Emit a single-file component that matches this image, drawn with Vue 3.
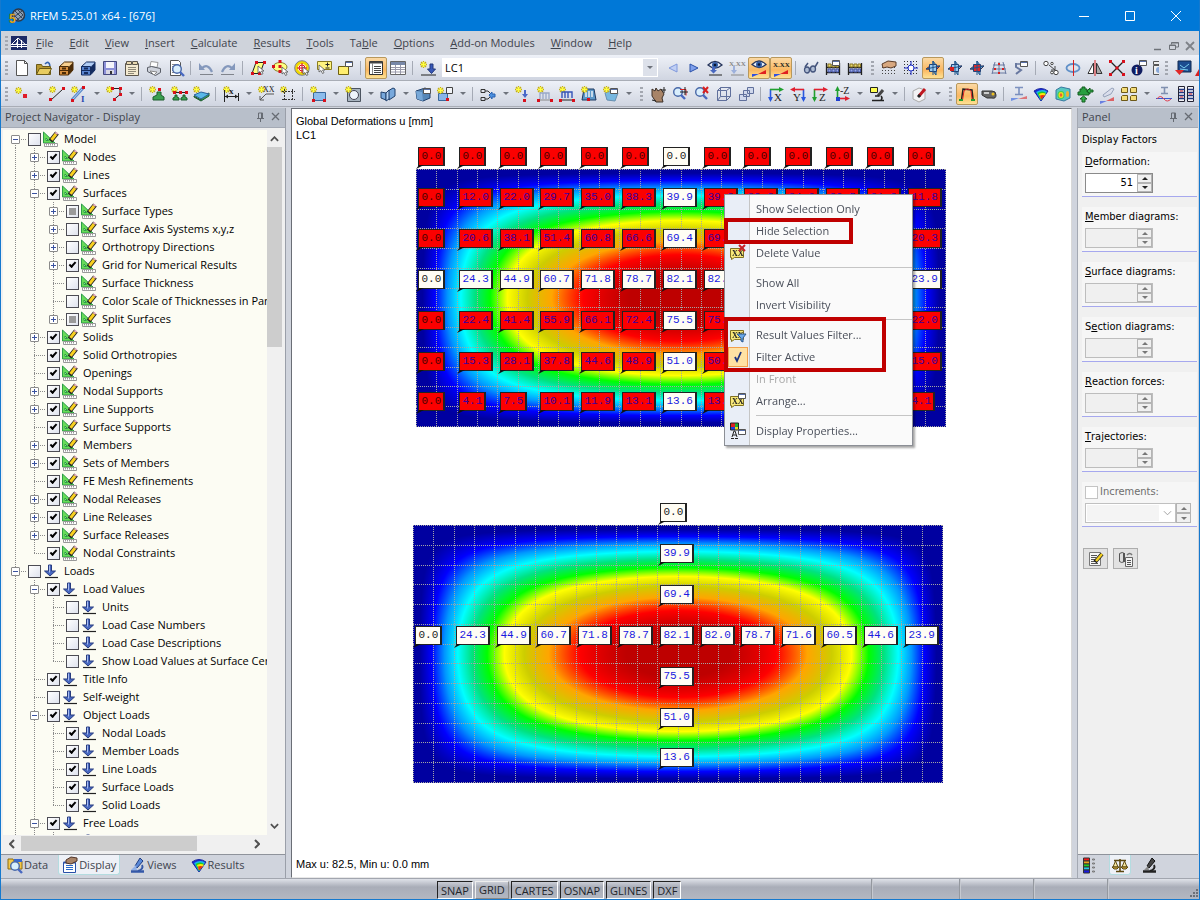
<script setup>
import { onMounted, ref } from 'vue'

/* ---------- icon drawing helpers (16 x 16 grid) ---------- */
const star = (x = 0, y = 0) =>
  `<g transform="translate(${x} ${y})"><path d="M3.5 0v7M0 3.5h7M1 1l5 5M6 1l-5 5" stroke="#c4ae18" stroke-width="1.3"/><path d="M3.5 1v5M1 3.5h5" stroke="#ffff40" stroke-width="1.6"/></g>`
const dot = (...pts) => pts.map(([x, y]) => `<path d="M${x} ${y}h3v3h-3z" fill="#d8101c"/>`).join('')
const ln = (d, c = '#333', w = 1) => `<path d="${d}" stroke="${c}" stroke-width="${w}" fill="none"/>`
const fl = (d, c, s = 'none') => `<path d="${d}" fill="${c}" stroke="${s}"/>`
const cursor = (x, y) =>
  `<path transform="translate(${x} ${y})" d="M0 0v7l2-1.500 1.500 3 1.500-.8-1.500-2.700H6z" fill="#fff" stroke="#555" stroke-width=".8"/>`
const win = (x, y) =>
  fl(`M${x}.5 ${y}.5h7v5h-7z`, '#fff', '#555') + ln(`M${x + 1} ${y + 1}.500h6`, '#5870a8')
const dots = (n, c = '#444') => {
  let s = ''
  for (let i = 1; i < 16; i += 3) for (let j = n; j < 16; j += 3) s += `M${i} ${j}h1v1h-1z`
  return fl(s, c)
}
const txt = (x, y, s, t, c = '#222') =>
  `<text x="${x}" y="${y}" font-size="${s}" font-weight="bold" font-family="Liberation Serif,serif" fill="${c}">${t}</text>`
const thin = (x, y, s, t) =>
  `<text x="${x}" y="${y}" font-size="${s}" font-family="Liberation Serif,serif" fill="#222">${t}</text>`
const arrowDown = (x, c = '#3858b8') => fl(`M${x} 4h3v5h2.500l-4 4.500-4-4.500H${x}z`, c, '#22387c')
const eye = (y = 0) =>
  `<g transform="translate(0 ${y})"><path d="M1 5q7-7 14 0q-7 6-14 0z" fill="#e8eef8" stroke="#28365c" stroke-width="1.300"/><circle cx="8" cy="5" r="3" fill="#345fa8"/><circle cx="8" cy="5" r="1.300" fill="#0a1530"/></g>`
const cabinet = (a, b, c) =>
  fl('M1.500 6.500l5-4.500h8.500v8l-4 4.500h-9.500z', a, c) + fl('M1.500 6.500h9v8.500h-9z', b, c) + fl('M11 6.500l4-4v7.500l-4 4.500z', c) +
  ln('M1.500 10.500h9', c) + fl('M4 7.500h4v2H4zM4 12h4v2H4z', c)
const lens = (x = 6, y = 6) =>
  `<circle cx="${x}" cy="${y}" r="4.300" fill="#d9eefc" stroke="#4868a8" stroke-width="1.400"/>` +
  ln(`M${x + 3} ${y + 3}l4 4`, '#4868c0', 2.4)
const beads = () =>
  ln('M1.500 3v12M14.500 3v12M1 7.500h14M1 12.500h14', '#222', 1.3) +
  fl('M3 4h3v3H3zM7 4h3v3H7zM11 4h2.500v3H11z', '#e8d870', '#887520') +
  fl('M3 9h3v3H3zM7 9h3v3H7zM11 9h2.500v3H11z', '#98a8e8', '#4050a0')
const ramp = (y = 0) =>
  fl(`M1 ${11 + y}l7 0-7 3z`, '#3050e0') + fl(`M15 ${7 + y}v4h-8z`, '#e02020')
const planes = (a, b) =>
  fl('M8 1l3 4v10l-3-4z', '#7cb4d8', '#20558a') + fl('M1 9l4-3h10l-4 4z', a, '#40304c') + fl('M4.500 4.500h7v7h-7z', b, '#204478') +
  ln('M8 1v14M1 9l14-3', '#20558a')
const contour3 =
  fl('M1 5q7-5 14 0l-7 10z', '#1828d8', '#1828a0') + fl('M3 6q6-3.500 11-.5l-6 9z', '#18b8e8') +
  fl('M4.500 7q5-3 8.500 0l-5 7z', '#20d020') + fl('M6 8q4-2 7 0l-5 5z', '#f8e810') + fl('M7 9.500q3-1 5 0l-4 4z', '#f03010')

const ic = {
  logo: `<circle cx="9.500" cy="7" r="6" fill="#8fa0b4" stroke="#2e3848" stroke-width="1.500"/>` + ln('M6 3l7 7M5 7l5 5M9 2l5 5M5 9l8-6M8 12l6-5', '#344458') +
    `<text x="0" y="15" font-size="12" font-weight="bold" font-family="Liberation Sans,sans-serif" fill="#ffc428" stroke="#7a5200" stroke-width=".4">5</text>`,
  bridge: fl('M0 1h16v14H0z', '#1c2a66') + ln('M0 9.500h16M0 11.500h16M6.500 3v10M10.500 5v8M7 3L1 9M7 3l8 7M7 6L5 9', '#fff', 1),
  file: fl('M2.500.5h8l3 3v12h-11z', '#fff', '#555') + ln('M10.500.5v3h3', '#555'),
  open: fl('M.5 4.500h5l1 2h8v8H.5z', '#b89830', '#6b5a18') + fl('M3.500 8.500h12l-3 6h-12z', '#e8cc60', '#6b5a18') + ln('M9 4q4-4 5 2', '#3464b0', 1.600),
  cabA: cabinet('#f8d090', '#d89040', '#4c2c08'),
  cabB: cabinet('#b0ccf4', '#5884d0', '#142c60'),
  save: fl('M1.500 1.500h13v13h-13z', '#8c90d8', '#44487c') + fl('M4 2h8v6H4z', '#f4f4fa') + fl('M4 10h8v4H4z', '#d8d8e4') + fl('M8 11h2v3H8z', '#333'),
  page: fl('M1.500 3.500h13v12h-13z', '#f4ead0', '#5c564c') + fl('M2.500 1.500h5v3h-5zM8.500 1.500h5v3h-5z', '#e8d8b0', '#5c564c') + ln('M4 7.500h8M4 9.500h8M4 11.500h8M4 13.500h6', '#8e8878'),
  print: fl('M5 1.500l7 1-1 5-7-1z', '#fff', '#999') + fl('M1.500 7.500l4-1 9 2v4l-5 3-8-4z', '#cfd3dc', '#5a5e68') + fl('M4 11l7 1-3 3z', '#fff', '#888'),
  preview: fl('M2.500.5h8l2 2v13h-10z', '#fff', '#555') + ln('M4 4.500h6M4 6.500h5M4 8.500h3M4 10.500h2M4 12.500h2', '#888') + lens(9, 9),
  undo: ln('M2 14.500h13', '#80848c') + ln('M4 8q6-5 10 4', '#8498bc', 2.2) + fl('M1 3v7h6z', '#8498bc'),
  redo: ln('M1 14.500h13', '#80848c') + ln('M12 8q-6-5-10 4', '#8498bc', 2.200) + fl('M15 3v7H9z', '#8498bc'),
  selPoly: fl('M6 2.500h8l-4 11H2z', '#ffff80', '#222') + dot([5, 1], [13, 1], [1, 12], [8, 12]) + cursor(8, 6),
  selEll: `<ellipse cx="8" cy="7" rx="7" ry="4.500" fill="#ffff80" stroke="#8a8030"/>` + dot([6.5, 0], [0, 5], [6.5, 5], [6.5, 10]) + cursor(10, 7),
  selCirc: `<circle cx="8" cy="8" r="5.500" fill="#fff" stroke="#f0d800" stroke-width="3"/><circle cx="8" cy="8" r="7.300" fill="none" stroke="#555" stroke-width=".7"/><circle cx="8" cy="8" r="3" fill="none" stroke="#d81020"/>` + ln('M8 3v10M3 8h10', '#d81020') + cursor(9, 7),
  selAdd: fl('M1.500 1.500h14v8h-14z', '#fff480', '#8a7c20') + ln('M11.500 2.500v4M9.500 4.500h4M9.500 8h4', '#222') + cursor(3, 5),
  selWin: fl('M.5 6.500h10v8H.5z', '#ffee70', '#6e6010') + win(7, 1),
  list: fl('M1.500 1.500h13v13h-13z', '#fff', '#333') + ln('M2 2.500h12', '#444', 2) + ln('M4.500 3v11', '#888') + ln('M6 6.500h7M6 8.500h7M6 10.500h7M6 12.500h7', '#444'),
  table: fl('M.5 1.500h15v13H.5z', '#fff', '#666') + fl('M1 2h14v3H1z', '#7888a8') + ln('M5.500 5v9M10.500 5v9M1 7.500h14M1 9.500h14M1 12h14', '#99a'),
  newLoad: star(0, 1) + arrowDown(10) + ln('M1 15h15', '#222'),
  left: fl('M12 4v8L4 8z', '#c0cff4', '#7f98dc'),
  right: fl('M4 4v8l8-4z', '#7fa0ec', '#2a50a8'),
  eyeLoad: eye(0) + fl('M5 7h3v3h2l-3.500 3.500L3 10h2z', '#4868c0') + ln('M2 15h13', '#222'),
  xLoad: txt(0, 6, 7, 'X.XX', '#888') + fl('M4 6h2v4h2l-3 4-3-4h2z', '#9cb0dc') + ln('M2 15h13', '#888'),
  eyeRamp: eye(-0.5) + ramp(3),
  xRamp: txt(0, 7, 7, 'X.XX') + ramp(3),
  glasses: `<g fill="#aebcd4" stroke="#44547c" stroke-width="1.300"><ellipse cx="4" cy="10" rx="2.500" ry="3"/><ellipse cx="10" cy="9" rx="2.500" ry="3"/></g>` + ln('M2 7l3-4M12 7l3-5M6.500 9l1-1', '#44547c', 1.5),
  abacusW: beads() + win(7, 0),
  abacus: beads(),
  handGrid: dots(7) + fl('M1 4l6-3 8 1v4l-5 2-4-1-4 1z', '#d8a880', '#5a3c28'),
  grid: dots(1, '#333') + ln('M8 1v14M1 8h14', '#1c2cc8') + `<circle cx="8" cy="8" r="3" fill="#fff" stroke="#1c2cc8"/>`,
  plane1: planes('#e84838', '#9ccaf0'),
  plane2: planes('#68b0e0', '#9ccaf0') + fl('M3 7h4v4H3z', '#d82020'),
  plane3: planes('#68b0e0', '#e02828'),
  gridLines: ln('M4 2L1 14M8 2v12M12 2l3 12M2 5h12M1 9h14M1 13h14', '#6878a0') + fl('M7 3h2v2H7zM3 8h2v2H3zM11 8h2v2h-2zM7 12h2v2H7z', '#d82020'),
  toolWin: win(7, 1) + ln('M3 3v4l5 3-5 4', '#6878a0', 2) + ln('M2 4h5', '#6878a0', 1.5),
  nodes: `<g fill="#fff" stroke="#444"><circle cx="3" cy="3.500" r="2.200"/><circle cx="9" cy="3.500" r="1.200"/><circle cx="13" cy="12.500" r="2.200"/><circle cx="9" cy="12.500" r="1.400"/></g>` + ln('M6 5l6 5M12 10V6M12 10H8', '#444'),
  rotate: `<ellipse cx="8" cy="8" rx="6.500" ry="4" fill="none" stroke="#6090c8" stroke-width="1.800"/>` + ln('M8.500 0v16', '#d82020'),
  mirror: fl('M1 13.500L6.500 3v10.500z', '#fff', '#333') + fl('M15 13.500L9.500 3v10.500z', '#aaa', '#333') + ln('M8 0v16', '#d82020'),
  cross: ln('M2 2l12 12M14 2L2 14', '#222', 1.300) + dot([0, 0], [13, 0], [0, 13], [13, 13], [6.500, 6.5]),
  info: `<circle cx="6" cy="10" r="5.500" fill="#101c60"/>` + txt(4, 14, 10, 'i', '#fff') + win(8, 0),
  half: fl('M2.500 1.500h8v3h-8zM2.500 5.500h8v9h-8z', '#eee', '#555') + `<circle cx="8" cy="10" r="3" fill="#88a8d8"/>`,
  monitor: fl('M3 1h13v11H3z', '#1c4c90', '#102850') + ln('M5 5l4 3 5-4M5 9l8 1', '#7cd0f0') + fl('M0 10h9l-4.500 5z', '#e02828'),
  sliver: fl('M0 16L4 9v7z', '#d82020'),
  nodeNew: star(1, 1) + fl('M9 8h4v4H9z', '#e01c28'),
  lineNew: star(0, 0) + ln('M2 14L14 3', '#222') + dot([0, 12], [13, 1]),
  member: star(0, 0) + ln('M1 14L12 2', '#5888c8', 3) + ln('M1 14L12 2', '#b8d4f4') + dot([0, 13], [11, 0]) + `<text x="10" y="16" font-size="9" font-weight="bold" font-family="Liberation Serif,serif" fill="#2848b0">I</text>`,
  polyNew: star(0, 0) + ln('M6 2.500h8v6l-6 5', '#222') + dot([5, 1], [13, 1], [13, 7], [7, 12]),
  support: star(0, 0) + dot([9, 2]) + fl('M8 6h4v3l3 2v3H4v-3l4-2z', '#3aa050', '#1c5c2c'),
  supports: star(0, 0) + ln('M4 6.500h11', '#222') + dot([8, 5], [14, 5], [2, 5]) + fl('M4 9h2v2l2 1v2H2v-2l2-1zM12 9h2v2l2 1v2h-6v-2l2-1z', '#3aa050', '#1c5c2c'),
  foundation: fl('M1 10l7 4v-3l8-4v3l-8 5-7-4z', '#3c9858', '#1c5c2c') + fl('M1 9l7-3 8 2-8 5z', '#58b8e8', '#28609c') + star(0, 0),
  dim: star(0, 0) + ln('M1.500 4v12M15.500 7v8M2 10.500h13', '#222') + fl('M2 10.500l3-2v4zM15 10.500l-3-2v4z', '#222') + txt(6, 8, 9, 'x'),
  note: star(0, 0) + thin(5, 6, 8, 'XX') + ln('M2 14l6-6h8M2 14v-4M2 14h4', '#555'),
  frame: star(0, 0) + `<path d="M2 5.500h13M4.500 3v12M12.500 3v12M2 13.500h13" stroke="#333" fill="none" stroke-dasharray="2 1"/>`,
  surface: fl('M3.500 6.500h12v8h-12z', '#8cbcec', '#38689c') + star(0, 0) + dot([2, 13], [13, 13]),
  opening: fl('M2.500 2.500h13v13h-13z', '#a8b4c0', '#4c5460') + `<circle cx="9" cy="9" r="4.500" fill="#eef4fc" stroke="#445"/>` + star(0, 0),
  solid: fl('M1 6l5 1v7l-5-2zM8 5l5-3 2 1v7l-6 4z', '#78a8dc', '#20406c') + fl('M6 7l3-3v9l-3 2z', '#b8d4f4', '#20406c'),
  box: fl('M1 5l9-3 5 2v8l-7 3-6-2z', '#5888b8', '#20406c') + fl('M1 5l6 1 1 9-6-2z', '#78a8d8') + win(8, 2),
  copyBox: fl('M1.500 7.500h9v7h-9z', '#88b4e8', '#38689c') + fl('M9.500 1.500h6v6h-6z', '#f2f4f8', '#444') + star(0, 1) + dot([9, 12]),
  hinge: ln('M1 3.500h4v3H1zM1 11.500h4v3H1zM5 5h3M5 13h3M8 5l2 2M8 13l2-2', '#333') + fl('M9 9l3-3v2h3v3h-3v2z', '#4c90e0', '#2860b0'),
  loadNode: star(0, 0) + fl('M9 4h2v4h2l-3 4-3-4h2z', '#4868c8') + dot([8, 13]),
  loadMem: star(0, 0) + ln('M3 13V7h9v6M6 7v6M9 7v6', '#98a8c8', 1.300) + ln('M1 14h14', '#888') + dot([0, 13], [13, 13]),
  loadLine: star(0, 0) + ln('M3 12V6h10v6M6 6v6M9 6v6', '#3454b8', 1.400) + ln('M1 14h14', '#222') + dot([0, 13], [13, 13]),
  loadSurf: fl('M3 3h10l2 11H1z', '#5c98c8', '#1c3860') + ln('M5 5v6M8 5v6M11 5v6', '#fff', 1.300) + star(0, 0) + dot([6, 12]),
  loadFree: fl('M2 7l7-3 6 3-3 8-8-1z', '#78b8e0', '#6890b0') + win(7, 2) + star(0, 0),
  pan: fl('M2 3l3 2 1-3 2 3 3-2 3 5-2 4 1 4H6l-4-6z', '#a88468', '#3c3028') + ln('M14 1v6M11 4h5M2 14l4 1', '#222'),
  zoomWin: lens() + ln('M8 3.500h6v6', '#d82020') + ln('M13 1v8M8 6h8', '#222'),
  zoomX: lens() + ln('M9 1l5 6M14 1L9 7', '#d82020', 2),
  cube: ln('M1.500 4.500h9v10h-9zM4.500 1.500h10v9h-10zM1.500 4.500l3-3M10.500 4.500l4-3M10.500 14.500l4-4M1.500 14.500l3-4', '#60709c'),
  cubes: fl('M9.500 1.500h6v6h-6zM5.500 4.500h6v6h-6zM1.500 8.500h7v6h-7z', '#d0d8ec', '#60709c'),
  vx: ln('M2.500 14V3', '#2858e0', 1.600) + fl('M0 11h5l-2.500 5z', '#2858e0') + ln('M2 3.500h10', '#20a030', 1.600) + fl('M11 1v5l5-2.500z', '#20a030') + thin(6, 15, 11, 'X'),
  vy: ln('M13.500 14V3', '#2858e0', 1.600) + fl('M11 11h5l-2.500 5z', '#2858e0') + ln('M14 3.500H5', '#e02030', 1.600) + fl('M5 1v5L0 3.500z', '#e02030') + thin(3, 15, 11, 'Y'),
  vz: ln('M2.500 14V3', '#20a030', 1.600) + fl('M0 11h5l-2.500 5z', '#20a030') + ln('M2 3.500h10', '#e02030', 1.600) + fl('M11 1v5l5-2.500z', '#e02030') + thin(7, 15, 11, 'Z'),
  vmz: ln('M3.500 13V4', '#20a030', 1.600) + fl('M1 5h5L3.500 0z', '#20a030') + ln('M3 12.500h9', '#e02030', 1.600) + fl('M11 10v5l5-2.500z', '#e02030') + thin(6, 8, 10, '-Z') + fl('M2 11h4v4H2z', '#2040d0'),
  camera: fl('M1.500 1.500h7v5h-7z', '#ffff50', '#222') + ln('M14 4l-5 6', '#444', 3) + ln('M12 10q2 2 0 4M6 10h4M3 14.500h12', '#222', 1.500),
  render: fl('M1 5l6-3 6 2v9l-6 3-6-3z', '#f2f2f4', '#aaa') + ln('M7 10l6-7', '#c01820', 3) + ln('M6 11l2-2', '#222', 3),
  deform: ln('M2.500 14L4 3l9 1 1 9', '#222', 1.500) + ln('M3.500 14L5 5q4-4 7 0l1 8', '#d82020') + fl('M0 13h4v2H0zM12 13h4v2h-4z', '#20a030'),
  video: fl('M1 5h10q4 0 4 4t-4 3H6L1 9z', '#666', '#333') + fl('M3 6h5v2H3z', '#ccc') + `<circle cx="12" cy="8" r="1.500" fill="#eec020"/>`,
  iRamp: `<g opacity=".6">` + ln('M4 1.500h8M4 8.500h8M8 1v8', '#3858a0', 1.600) + fl('M0 12h8l-8 3z', '#3060e0') + fl('M16 10v3H7z', '#e03030') + '</g>',
  contour: contour3,
  cube3: fl('M1 4l5-3 9 2v9l-6 3-8-2z', '#58c8c0', '#3878a0') + `<ellipse cx="6" cy="9" rx="3.500" ry="4" fill="#40d050"/><ellipse cx="6" cy="9" rx="2.500" ry="3" fill="#f0e020"/><ellipse cx="6" cy="9" rx="1.300" ry="1.800" fill="#f06030"/><ellipse cx="12.500" cy="8" rx="1.500" ry="3" fill="#f0b030"/>`,
  reaction: fl('M5 1h3v2h2v3h2v3H1V6h2V3h2z', '#28a040', '#145c20') + fl('M16 4h-3V2l-3 3 3 3V6h3zM5 16v-3H3l3.500-3 3.500 3H8v3z', '#30b048', '#145c20'),
  pen: `<g opacity=".65">` + fl('M4 9l9-7 2 1-3 5-7 3z', '#d8dcec', '#7080a0') + ramp(4) + '</g>',
  four: fl('M.5 2.500l1-1h5v5h-6zM9.500 2.500l1-1h5v5h-6zM.5 10.500l1-1h5v5h-6zM9.500 10.500l1-1h5v5h-6z', '#f4dc78', '#6c5818'),
  wave: ln('M5 1.500h7M5 7.500h7M8.500 1v7', '#8090b0', 1.600) + ln('M0 12.500h16', '#3858d0') + ln('M1 13q3-5 7 0q3 4 7 0', '#e04050'),
  table2: fl('M.5.5h6v15h-6zM9.500.5h6v15h-6z', '#f4f4f8', '#223') + ln('M1 3.500h6M1 6.500h6M1 9.500h6M1 12.500h6M10 3.500h6M10 6.500h6M10 9.500h6M10 12.500h6', '#223880', 1.3) + ln('M2 5h3M11 8h3M2 11h3', '#e03030'),
  model: fl('M.5 1v11H12z', '#68dc58', '#2c9c48') + fl('M3 7v2.500h2.500z', '#e8ffe0', '#2c9c48') + ln('M7.500 10L14 2', '#222', 4.600) + ln('M8.500 8.800L13 3', '#f8d020', 3) + ln('M13 3l1-1.500', '#e8b0c0', 3) +
    fl('M1.500 12.500h13v3h-13z', '#fff', '#999') + ln('M3.500 13v1.500M5.500 13v1.500M7.500 13v1.500M9.500 13v1.500M11.500 13v1.500', '#999'),
  load: fl('M5.500 2h3v6h4L7 13 1.500 8h4z', '#4868c0', '#283c80') + ln('M6.500 2.500v7', '#a8bcf0') + ln('M2 14.500h13', '#222', 1.2),
  data: fl('M1 2h5l1 2h8v8H1z', '#f4c848', '#8c6c10') + fl('M7 2h8v3H7z', '#3868d0') + lens(8, 9),
  display: fl('M1.500 5.500h12v10h-12z', '#fff', '#2850a8') + ln('M1.500 5.500h12', '#2850a8', 2) + ln('M4 8.500h7M4 10.500h7M4 12.500h7', '#2868c8') + fl('M4 3l5-3 6 1v3l-6 3-5-1z', '#a88468', '#503428'),
  views: fl('M10 1l3 3-6 7-2-2z', '#5888d8', '#203c80') + ln('M12 8q2 4-4 6', '#3458a8', 2) + ln('M1 14.500h13', '#3458a8', 2.500) + fl('M1 13l5-5 1 5z', '#90b0e8'),
  scope: fl('M10 1l3 3-6 7-2-2z', '#444', '#111') + ln('M12 8q2 4-4 6', '#222', 2) + ln('M1 14.500h13', '#222', 2.5) + fl('M2 13l4-4 1 4z', '#888'),
  scaleBar: fl('M1.500 1h6v3h-6z', '#f01818', '#333') + fl('M1.500 4h6v3h-6z', '#f0a018', '#333') + fl('M1.500 7h6v3h-6z', '#20d020', '#333') + fl('M1.500 10h6v3h-6z', '#20c8e8', '#333') + fl('M1.500 13h6v3h-6z', '#1818e0', '#333') +
    ln('M10.500 2h2v1h-2zM10.500 6h2v1h-2zM10.500 10h2v1h-2zM10.500 14h2v1h-2z', '#777'),
  balance: ln('M8 2v12M4 14.500h8M2 3.500h12', '#5c4810', 1.600) + fl('M3.500 4L1 10h5zM12.500 4L10 10h5z', '#f8e8a0', '#5c4810') + fl('M0 10h7l-2 2H2zM9 10h7l-2 2h-3z', '#d8b040', '#5c4810'),
  xx: fl('M.5 3.500h13v9h-9l-3 2v-2h-1z', '#f8e878', '#807020') + txt(2, 11, 8, 'XX'),
  edit: fl('M1.500 1.500h11v13h-11z', '#f8f8f8', '#777') + ln('M3 4.500h6M3 6.500h5M3 8.500h4M3 10.500h5M3 12.500h7', '#555') + ln('M7 11l7-8', '#222', 4) + ln('M8 10l6-7', '#f4d020', 2.4),
  copyFmt: fl('M1.500 2.500q3-2 5 0v8q-3 2-5 0z', '#ddd', '#555') + fl('M5 2h2v9H5z', '#555') + fl('M7.500 6.500h7v9h-7z', '#f4f4f4', '#666') + ln('M9 9.500h4M9 11.500h4M9 13.500h4', '#555') + ln('M9 4q3-3 5 0', '#777', 1.500),
  props: fl('M1 0h4v4H1z', '#e02020') + fl('M5 0h4v4H5z', '#20b030') + fl('M1 4h4v3H1z', '#2040d8') + fl('M5 4h4v3H5z', '#e8e020') + ln('M.5 0v7h8V0z', '#222') + ln('M2 14l2-6h1l2 6M3 12h3M1 15.500h3M5 15.500h3', '#222') + win(8, 6)
}
ic.xxDel = ic.xx + ln('M9 0l6 6M15 0L9 6', '#c82028', 2)
ic.xxFilter = ic.xx + fl('M7 7h9l-3 4v4l-2-1v-3z', '#68a8e8', '#2c5890')
ic.xxWin = ic.xx + win(8, 0)

/* ---------- toolbars ---------- */
const bars = [
  ['file open cabA cabB save page print preview | undo redo | selPoly selEll selCirc selAdd selWin | *list table | newLoad', 'COMBO',
    'left right eyeLoad xLoad *eyeRamp *xRamp | glasses abacusW abacus', '#',
    'handGrid grid *plane1 plane2 plane3 gridLines toolWin | nodes rotate mirror cross info half', '#', 'monitor sliver'],
  ['nodeNew v lineNew member v polyNew v | support supports foundation | dim v note frame | surface v opening v solid v box copyBox v | hinge v loadNode loadMem loadLine loadSurf loadFree v', '#',
    'pan zoomWin zoomX cube cubes | vx vy vz vmz v camera v | render v', '#',
    '*deform video | iRamp contour cube3 reaction pen four v wave table2']
].map(parts => parts.flatMap(p => p.split(' ')).map(t => {
  if (t === '|') return { k: 'sep' }
  if (t === 'v') return { k: 'drop' }
  if (t === '#') return { k: 'grip' }
  if (t === 'COMBO') return { k: 'combo' }
  return { k: 'btn', on: t[0] === '*', name: t.replace('*', '') }
}))

const menus = ['_File', '_Edit', '_View', '_Insert', '_Calculate', '_Results', '_Tools', 'Ta_ble', '_Options', '_Add-on Modules', '_Window', '_Help']
  .map(s => { const [a, b] = s.split('_'); return { a, u: b[0], b: b.slice(1) } })

/* ---------- navigator tree ----------
   level, toggle (+ - or .), check (1 on, 0 off, 2 partial), label */
const raw = `0-0Model
1+1Nodes
1+1Lines
1-1Surfaces
2+2Surface Types
2+0Surface Axis Systems x,y,z
2+0Orthotropy Directions
2+1Grid for Numerical Results
2.0Surface Thickness
2.0Color Scale of Thicknesses in Panel
2+2Split Surfaces
1+1Solids
1.1Solid Orthotropies
1.1Openings
1+1Nodal Supports
1+1Line Supports
1.1Surface Supports
1+1Members
1+1Sets of Members
1.1FE Mesh Refinements
1+1Nodal Releases
1+1Line Releases
1+1Surface Releases
1.1Nodal Constraints
0-0Loads
1-1Load Values
2.0Units
2.0Load Case Numbers
2.0Load Case Descriptions
2.0Show Load Values at Surface Centers
1.1Title Info
1.0Self-weight
1-1Object Loads
2.1Nodal Loads
2.1Member Loads
2.1Line Loads
2.1Surface Loads
2.1Solid Loads
1-1Free Loads
2.1`.split('\n').map(r => ({ level: +r[0], tog: r[1], check: +r[2], label: r.slice(3) }))
let group = 'model'
const rows = raw.map((r, i) => {
  if (r.level === 0) group = r.label === 'Model' ? 'model' : 'load'
  const more = l => {
    for (let j = i + 1; j < raw.length; j++) {
      if (raw[j].level === l) return true
      if (raw[j].level < l) return false
    }
    return l < 2
  }
  const guides = []
  for (let l = 0; l < r.level; l++) guides.push(l === 0 || more(l))
  return { ...r, id: 'n' + i, icon: group, guides, last: !(r.level === 0 || more(r.level)), first: i === 0 }
})

/* ---------- result field ---------- */
const W = 530, H = 258
const stops = [[0, 0, 160], [0, 0, 255], [0, 150, 255], [0, 255, 255], [0, 226, 130], [0, 255, 0], [255, 255, 0], [205, 205, 0], [255, 165, 0], [255, 0, 0], [190, 0, 0]]
const fx = t => (Math.sin(Math.PI * t) + 0.0524 * Math.sin(3 * Math.PI * t) + 0.0105 * Math.sin(5 * Math.PI * t)) / 0.958
const fy = t => Math.sin(Math.PI * t) + 0.008 * Math.sin(3 * Math.PI * t)
function paint(cv) {
  const g = cv.getContext('2d')
  const img = g.createImageData(W, H)
  for (let y = 0; y < H; y++) for (let x = 0; x < W; x++) {
    const p = Math.min(10, Math.max(0, fx(x / (W - 1)) * fy(y / (H - 1)) * 11 - 0.5))
    const a = Math.min(9, Math.floor(p)), f = p - a, o = (y * W + x) * 4
    for (let c = 0; c < 3; c++) img.data[o + c] = stops[a][c] * (1 - f) + stops[a + 1][c] * f
    img.data[o + 3] = 255
  }
  g.putImageData(img, 0, 0)
  g.fillStyle = '#a4a4a4'
  for (let i = 0; i <= 26; i++) {
    const x = Math.round(i * (W - 1) / 26)
    for (let y = 0; y < H; y += 2) g.fillRect(x, y, 1, 1)
  }
  for (let j = 0; j <= 13; j++) {
    const y = Math.round(j * (H - 1) / 13)
    for (let x = 0; x < W; x += 2) g.fillRect(x, y, 1, 1)
  }
}
const cvA = ref(null), cvB = ref(null)
onMounted(() => { paint(cvA.value); paint(cvB.value) })

const values = [
  '0.0 0.0 0.0 0.0 0.0 0.0 0.0 0.0 0.0 0.0 0.0 0.0 0.0',
  '0.0 12.0 22.0 29.7 35.0 38.3 39.9 39.8 38.2 34.9 29.5 21.8 11.8',
  '0.0 20.6 38.1 51.4 60.8 66.6 69.4 69.3 66.5 60.6 51.2 37.8 20.3',
  '0.0 24.3 44.9 60.7 71.8 78.7 82.1 82.0 78.7 71.6 60.5 44.6 23.9',
  '0.0 22.4 41.4 55.9 66.1 72.4 75.5 75.4 72.3 65.9 55.7 41.1 22.0',
  '0.0 15.3 28.1 37.8 44.6 48.9 51.0 50.9 48.8 44.5 37.6 27.9 15.0',
  '0.0 4.1 7.5 10.1 11.9 13.1 13.6 13.6 13.0 11.9 10.0 7.4 4.1'
].map(r => r.split(' '))
const tags = []
values.forEach((r, j) => r.forEach((v, i) => tags.push({
  v, keep: i === 6 || j === 3, zero: v === '0.0',
  style: { left: Math.round(i * 40.8) + 'px', top: Math.round(j * 40.9) + 'px' }
})))
const plates = [
  { id: 'a', tags },
  { id: 'b', tags: tags.filter(t => t.keep) }
]
const setCv = id => el => { if (id === 'a') cvA.value = el; else cvB.value = el }

const ctx = [
  { t: 'Show Selection Only' }, { t: 'Hide Selection' }, { t: 'Delete Value', i: 'xxDel' }, null,
  { t: 'Show All' }, { t: 'Invert Visibility' }, null,
  { t: 'Result Values Filter...', i: 'xxFilter' }, { t: 'Filter Active', tick: true }, { t: 'In Front', off: true }, { t: 'Arrange...', i: 'xxWin' }, null,
  { t: 'Display Properties...', i: 'props' }
]
const factors = [['', 'D', 'eformation:', '51'], ['', 'M', 'ember diagrams:', ''], ['', 'S', 'urface diagrams:', ''], ['S', 'e', 'ction diagrams:', ''], ['', 'R', 'eaction forces:', ''], ['', 'T', 'rajectories:', '']]
const tabs = [['data', 'Data'], ['display', 'Display'], ['views', 'Views'], ['contour', 'Results']]
const modes = ['SNAP', 'GRID', 'CARTES', 'OSNAP', 'GLINES', 'DXF']
</script>

<template>
  <div class="app">
    <header class="title">
      <svg class="ic" viewBox="0 0 16 16" v-html="ic.logo"></svg>
      <span class="grow">RFEM 5.25.01 x64 - [676]</span>
      <button aria-label="Minimize"><svg viewBox="0 0 10 10"><path d="M0 5.500h10" stroke="#fff" /></svg></button>
      <button aria-label="Maximize"><svg viewBox="0 0 10 10"><path d="M.5.5h9v9h-9z" stroke="#fff" fill="none" /></svg></button>
      <button aria-label="Close"><svg viewBox="0 0 10 10"><path d="M0 0l10 10M10 0L0 10" stroke="#fff" /></svg></button>
    </header>

    <nav class="menubar">
      <i class="grip"></i>
      <svg class="ic" viewBox="0 0 16 16" v-html="ic.bridge"></svg>
      <button v-for="m in menus" :key="m.b">{{ m.a }}<u>{{ m.u }}</u>{{ m.b }}</button>
      <div class="mdi">
        <svg viewBox="0 0 10 10"><path d="M1 8.500h7" stroke="#6e7278" stroke-width="1.500" /></svg>
        <svg viewBox="0 0 10 10"><path d="M.5 4h6v4.500h-6zM2.500 3.500v-2h7v4.500h-2.500M.5 4.500h6M2.500 2h7" stroke="#6e7278" fill="none" /></svg>
        <svg viewBox="0 0 10 10"><path d="M1 1l8 8M9 1L1 9" stroke="#7e8288" stroke-width="1.800" /></svg>
      </div>
    </nav>

    <div v-for="(bar, b) in bars" :key="b" class="toolbar">
      <i class="grip"></i>
      <template v-for="(t, k) in bar" :key="k">
        <i v-if="t.k === 'sep'" class="sep"></i>
        <i v-else-if="t.k === 'grip'" class="split"><i class="grip"></i></i>
        <button v-else-if="t.k === 'drop'" class="drop" aria-label="More"></button>
        <div v-else-if="t.k === 'combo'" class="combo">
          <select aria-label="Load case"><option>LC1</option></select><i></i>
        </div>
        <button v-else class="tb" :class="[{ on: t.on }, t.name]" :aria-label="t.name"><svg class="ic" viewBox="0 0 16 16" v-html="ic[t.name]"></svg></button>
      </template>
    </div>

    <main class="main">
      <section class="nav">
        <h2 class="cap">Project Navigator - Display
          <svg viewBox="0 0 24 10"><path d="M1 6.500h7M4.500 7v3M2.500 1h4M2.500 1v5M6.500 1v5M5.500 1v5" stroke="#666b73" fill="none" /><path d="M16 1l7 7M23 1l-7 7" stroke="#666b73" stroke-width="1.300" /></svg>
        </h2>
        <div class="treebox">
          <ul class="tree">
            <li v-for="r in rows" :key="r.id">
              <i v-for="(g, k) in r.guides" :key="k" class="guide" :class="{ v: g }"></i>
              <i class="guide v node" :class="{ last: r.last, first: r.first }"><b v-if="r.tog !== '.'" class="tog" :class="{ plus: r.tog === '+' }"></b></i>
              <input :id="r.id" type="checkbox" :class="{ part: r.check === 2 }" :checked="r.check === 1" />
              <svg class="ic" viewBox="0 0 16 16" v-html="ic[r.icon]"></svg>
              <label :for="r.id">{{ r.label }}</label>
            </li>
          </ul>
          <div class="vbar">
            <svg viewBox="0 0 10 6"><path d="M1 5l4-4 4 4" stroke="#505050" stroke-width="2" fill="none" /></svg>
            <i></i>
            <svg viewBox="0 0 10 6"><path d="M1 1l4 4 4-4" stroke="#505050" stroke-width="2" fill="none" /></svg>
          </div>
          <div class="hbar">
            <svg viewBox="0 0 6 10"><path d="M5 1L1 5l4 4" stroke="#505050" stroke-width="2" fill="none" /></svg>
            <i></i>
            <svg viewBox="0 0 6 10"><path d="M1 1l4 4-4 4" stroke="#505050" stroke-width="2" fill="none" /></svg>
          </div>
        </div>
        <div class="tabs">
          <button v-for="t in tabs" :key="t[1]" :class="{ sel: t[1] === 'Display' }"><svg class="ic" viewBox="0 0 16 16" v-html="ic[t[0]]"></svg>{{ t[1] }}</button>
        </div>
      </section>

      <section class="view">
        <p class="head">Global Deformations u [mm]<br />LC1</p>
        <div v-for="p in plates" :key="p.id" class="plate" :class="p.id">
          <canvas :ref="setCv(p.id)" width="530" height="258"></canvas>
          <div v-for="(t, k) in p.tags" :key="k" class="tag" :class="{ red: !t.keep, zero: t.zero }" :style="t.style">
            <span>{{ t.v }}</span><svg viewBox="0 0 8 5"><path d="M0 5L3 1h5z" fill="#111" /></svg>
          </div>
        </div>
        <p class="foot">Max u: 82.5, Min u: 0.0 mm</p>

        <div class="ctx" role="menu">
          <template v-for="(c, k) in ctx" :key="k">
            <hr v-if="!c" />
            <button v-else role="menuitem" :disabled="c.off">
              <i :class="{ tick: c.tick }"><svg v-if="c.i" class="ic" viewBox="0 0 16 16" v-html="ic[c.i]"></svg><svg v-else-if="c.tick" viewBox="0 0 16 16"><path d="M5 8l2 4 4-9" stroke="#1c3480" stroke-width="1.800" fill="none" /></svg></i>{{ c.t }}
            </button>
          </template>
          <i class="mark one"></i><i class="mark two"></i>
        </div>
      </section>

      <section class="panel">
        <h2 class="cap">Panel
          <svg viewBox="0 0 24 10"><path d="M1 6.500h7M4.500 7v3M2.500 1h4M2.500 1v5M6.500 1v5M5.500 1v5" stroke="#666b73" fill="none" /><path d="M16 1l7 7M23 1l-7 7" stroke="#666b73" stroke-width="1.300" /></svg>
        </h2>
        <div class="pbody">
          <h3>Display Factors</h3>
          <div v-for="(f, k) in factors" :key="k" class="fac" :class="{ dis: !f[3] }">
            <label :for="'f' + k">{{ f[0] }}<u>{{ f[1] }}</u>{{ f[2] }}</label>
            <div class="spin"><input :id="'f' + k" type="text" :value="f[3]" :disabled="!f[3]" /><div class="ud"><button aria-label="Up"></button><button aria-label="Down"></button></div></div>
          </div>
          <div class="fac dis inc">
            <label><input type="checkbox" disabled />Increments:</label>
            <div class="incrow">
              <div class="dd"><select disabled aria-label="Increment"><option></option></select><svg viewBox="0 0 10 6"><path d="M1 1l4 4 4-4" stroke="#999" fill="none" /></svg></div>
              <div class="ud"><button aria-label="Up"></button><button aria-label="Down"></button></div>
            </div>
          </div>
          <div class="pbtns">
            <button aria-label="Edit"><svg class="ic" viewBox="0 0 16 16" v-html="ic.edit"></svg></button>
            <button aria-label="Copy"><svg class="ic" viewBox="0 0 16 16" v-html="ic.copyFmt"></svg></button>
          </div>
        </div>
        <div class="tabs ptabs">
          <button aria-label="Color scale"><svg class="ic" viewBox="0 0 16 16" v-html="ic.scaleBar"></svg></button>
          <button class="sel" aria-label="Factors"><svg class="ic" viewBox="0 0 16 16" v-html="ic.balance"></svg></button>
          <button aria-label="Filter"><svg class="ic" viewBox="0 0 16 16" v-html="ic.scope"></svg></button>
        </div>
      </section>
    </main>

    <footer class="status">
      <button v-for="m in modes" :key="m" :class="{ up: m === 'GRID' }">{{ m }}</button>
      <span class="cells"><i></i><i></i><i></i><i></i></span>
      <svg class="size" viewBox="0 0 10 10"><path d="M8 1h2v2H8zM8 4h2v2H8zM8 7h2v2H8zM5 4h2v2H5zM5 7h2v2H5zM2 7h2v2H2z" fill="#6c7078" /></svg>
    </footer>
  </div>
</template>

<style>
html, body, #app { height: 100%; }
body { overflow: hidden; }
</style>

<style scoped>
.app { box-sizing: border-box; height: 100vh; display: flex; flex-direction: column; background: #d0d4dd; border: 1px solid #1579ce; border-top: 0; font: 11px/16px "Open Sans", "Noto Sans", sans-serif; color: #000; }
.app *, .app *::before, .app *::after { box-sizing: border-box; }
button { font: inherit; color: inherit; background: none; border: 0; padding: 0; margin: 0; }
i { font-style: normal; display: block; }
svg { display: block; flex: none; }
.ic { width: 16px; height: 16px; fill: none; overflow: visible; }
h2, h3, p, ul { margin: 0; padding: 0; font-weight: normal; font-size: inherit; }

.title { flex: none; height: 31px; display: flex; align-items: center; background: #0078d7; color: #fff; padding-left: 8px; }
.title .grow { flex: 1; padding-left: 5px; }
.title button { width: 46px; height: 31px; display: grid; place-items: center; }
.title button svg { width: 10px; height: 10px; }

.grip { flex: none; width: 3px; height: 14px; background: repeating-linear-gradient(#a3a7b0 0 2px, transparent 2px 4px); }
.menubar { flex: none; height: 24px; display: flex; align-items: center; background: #cfd3db; padding-left: 4px; color: #3f444d; }
.menubar .ic { margin: 0 1px 0 3px; }
.menubar button { padding: 0 8px; line-height: 24px; }
.mdi { margin-left: auto; display: flex; gap: 6px; padding: 6px 4px 0 0; }
.mdi svg { width: 10px; height: 10px; }

.toolbar { flex: none; height: 26px; display: flex; align-items: center; padding-left: 4px; background: linear-gradient(#eef1f8, #dfe3ec 50%, #d0d5e1); border-bottom: 1px solid #a9adb6; overflow: hidden; }
.toolbar > .grip { margin-right: 3px; }
.tb { flex: none; width: 22px; height: 22px; display: grid; place-items: center; border: 1px solid transparent; }
.tb.on { background: linear-gradient(#fbd9a4, #fbb760 60%, #fde294); border-color: #b8985c; border-radius: 2px; }
.tb.left, .tb.right { width: 21px; }
.tb.half { width: 10px; overflow: hidden; }
.tb.sliver { width: 8px; overflow: hidden; place-items: center start; }
.drop { flex: none; width: 13px; height: 22px; display: grid; place-items: center; }
.drop::before { content: ""; border: 3px solid transparent; border-top-color: #6e737c; border-bottom: 0; }
.sep { flex: none; width: 1px; height: 14px; margin: 0 4px 0 3px; background: #a5aab5; }
.split { flex: none; width: 12px; display: flex; justify-content: center; }
.combo { flex: none; width: 216px; height: 19px; margin: 0 4px 0 3px; display: grid; background: #fff; }
.combo select { grid-area: 1 / 1; appearance: none; border: 0; background: #fff; font: inherit; padding: 0 3px; color: #000; }
.combo i { grid-area: 1 / 1; justify-self: end; width: 14px; height: 17px; align-self: center; margin-right: 1px; background: #dde1ea; display: grid; place-items: center; pointer-events: none; }
.combo i::before { content: ""; border: 3px solid transparent; border-top-color: #6e737c; border-bottom: 0; }

.main { flex: 1; min-height: 0; display: grid; grid-template-columns: 285px 1fr 121px; column-gap: 5px; padding: 1px 1px 0 0; }
.cap { flex: none; height: 20px; display: flex; align-items: center; justify-content: space-between; background: #b8bfca; color: #3f444c; padding: 0 5px 1px 4px; border-bottom: 1px solid #a4aab5; }
.cap svg { width: 24px; height: 10px; }
.nav, .panel { display: flex; flex-direction: column; min-height: 0; min-width: 0; }
.nav { border-right: 1px solid #9a9fa9; }
.treebox { flex: 1; min-height: 0; display: grid; grid-template: 1fr 16px / 1fr 15px; padding: 2px 3px 3px 2px; background: #f0f0f0; border-bottom: 1px solid #8f939b; }
.tree { list-style: none; overflow: hidden; background: #fcfcf3; padding-left: 2px; min-height: 0; }
.tree li { display: flex; align-items: center; height: 18px; white-space: nowrap; }
.guide { flex: none; width: 19px; height: 18px; position: relative; }
.guide.v::before { content: ""; position: absolute; left: 10px; top: 0; bottom: 0; width: 1px; background: repeating-linear-gradient(#8a8a8a 0 1px, transparent 1px 2px); }
.guide.first::before { top: 9px; }
.guide.last::before { bottom: 9px; }
.guide.node { width: 21px; }
.guide.node::after { content: ""; position: absolute; left: 10px; right: 0; top: 9px; height: 1px; background: repeating-linear-gradient(90deg, #8a8a8a 0 1px, transparent 1px 2px); }
.tog { position: absolute; z-index: 1; left: 6px; top: 5px; width: 9px; height: 9px; border: 1px solid #8a8a8a; border-radius: 1px; background: linear-gradient(#3a52a0, #3a52a0) 1px 3px / 5px 1px no-repeat, #fff; }
.tog.plus { background: linear-gradient(#3a52a0, #3a52a0) 1px 3px / 5px 1px no-repeat, linear-gradient(#3a52a0, #3a52a0) 3px 1px / 1px 5px no-repeat, #fff; }
.tree input { appearance: none; flex: none; width: 13px; height: 13px; margin: 0 2px 0 2px; border: 1px solid #4c4c54; background: linear-gradient(135deg, #fff, #dfe3ee); display: grid; place-items: center; }
.tree input:checked::before { content: ""; width: 7px; height: 4px; border: solid #000; border-width: 0 0 2px 2px; transform: translateY(-1px) rotate(-48deg); }
.tree input.part::before { content: ""; width: 7px; height: 7px; background: #9a9a9a; }
.tree label { padding-left: 5px; }
.vbar { display: flex; flex-direction: column; align-items: center; background: #f0f0f0; padding: 6px 0; }
.vbar svg { width: 9px; height: 6px; }
.vbar i { width: 15px; height: 200px; background: #cdcdcd; margin: 5px 0 auto; }
.hbar { display: flex; align-items: center; background: #f0f0f0; padding: 1px 7px 0 6px; }
.hbar svg { width: 6px; height: 10px; }
.hbar i { width: 70%; height: 15px; background: #cdcdcd; margin: 0 auto 0 6px; }
.tabs { flex: none; height: 23px; display: flex; align-items: flex-start; color: #3f444d; padding-left: 2px; gap: 6px; }
.tabs button { display: flex; align-items: center; gap: 1px; height: 20px; padding: 0 3px; border: 1px solid transparent; border-top: 0; }
.tabs .sel { background: #eef1f7; border-color: #b4dce0; border-radius: 0 0 3px 3px; }

.view { position: relative; background: #fff; border: 1px solid #6a6e76; border-right-color: #d8d8d8; border-bottom-color: #e8e8e8; display: flex; flex-direction: column; align-items: center; min-width: 0; font: 11px/14px "Liberation Sans", Arial, sans-serif; }
.head { align-self: stretch; padding: 5px 4px 0; height: 60px; }
.foot { align-self: stretch; padding: 0 4px; margin: auto 0 6px; }
.plate { position: relative; width: 530px; height: 258px; margin-right: 2px; }
.plate.b { margin: 98px 8px 0 0; }
.plate canvas { display: block; }
.tag { position: absolute; width: 0; height: 0; }
.tag svg { position: absolute; left: 0; bottom: 0; width: 8px; height: 5px; }
.tag span { position: absolute; left: 2px; bottom: 3px; height: 19px; padding: 0 2px 0 3px; border: 1px solid #222; border-right-width: 2px; background: #fffdf4; color: #1a1ae0; font: 11px/17px "Liberation Mono", "Courier New", monospace; }
.tag.zero span { color: #222; }
.tag.red span { background: #fb0000; color: #3c00a0; }
.tag.red.zero span { color: #4a0000; }

.ctx { position: absolute; left: 432px; top: 85px; width: 189px; padding: 3px 0; border: 1px solid #8c8f96; background: linear-gradient(90deg, #e9eef7 24px, #c5c5c5 24px 25px, #fafafa 25px); box-shadow: 2px 2px 2px rgba(0, 0, 0, .35); font: 11px/22px "Open Sans", "Noto Sans", sans-serif; color: #4a4f5a; }
.ctx button { display: flex; align-items: center; width: 100%; height: 22px; text-align: left; }
.ctx button:disabled { color: #a8a8a8; }
.ctx button i { width: 20px; height: 20px; margin: 0 8px 0 3px; display: grid; place-items: center; border: 1px solid transparent; }
.ctx button i svg { width: 16px; height: 16px; }
.ctx button i.tick { background: #ffe2a4; border-color: #f2a04c; }
.ctx hr { height: 1px; margin: 3px 0 4px 31px; border: 0; background: #c5c5c5; }
.mark { position: absolute; left: -1px; border: 4px solid #c00000; pointer-events: none; }
.mark.one { top: 23px; width: 129px; height: 26px; }
.mark.two { top: 122px; width: 162px; height: 55px; }

.panel { border-left: 1px solid #a4a9b3; }
.pbody { flex: 1; background: #f0f0f0; border-bottom: 1px solid #8f939b; padding: 4px 1px 0 4px; font: 11px/14px "DejaVu Sans Condensed", Tahoma, sans-serif; }
.pbody h3 { line-height: 16px; margin-bottom: 4px; }
.fac { height: 45px; margin-bottom: 10px; background: #f6f6f6; border-bottom: 1px solid #a6a8ee; padding: 3px 0 0 3px; }
.fac label { display: flex; align-items: center; height: 14px; white-space: pre; }
.spin { display: flex; width: 68px; height: 20px; margin-top: 4px; border: 1px solid #8a8a8a; background: #fff; }
.spin input { flex: 1; min-width: 0; border: 0; background: none; text-align: right; font: inherit; padding: 0 4px; }
.dis .spin { background: #f0f0f0; border-color: #bdbdbd; }
.ud { width: 15px; display: flex; flex-direction: column; background: #f0f0f0; }
.ud button { flex: 1; border: 1px solid #b4b4b4; display: grid; place-items: center; }
.ud button::before { content: ""; border: 3px solid transparent; border-bottom-color: #222; border-top: 0; }
.ud button + button::before { border: 3px solid transparent; border-top-color: #222; border-bottom: 0; }
.dis .ud button::before { border-bottom-color: #777; }
.dis .ud button + button::before { border-bottom-color: transparent; border-top-color: #777; }
.inc label { color: #6d6d6d; }
.inc label input { appearance: none; width: 13px; height: 13px; margin: 0 2px 0 0; border: 1px solid #c4c4c4; background: #fff; }
.incrow { display: flex; height: 20px; margin-top: 4px; }
.dd { width: 91px; border: 1px solid #c0c0c0; background: #fff; display: flex; align-items: center; }
.dd select { appearance: none; flex: 1; height: 18px; border: 1px solid #fff; background: #f0f0f0; }
.dd svg { width: 9px; height: 6px; margin: 0 3px; }
.pbtns { display: flex; gap: 5px; margin-top: 21px; padding-left: 1px; }
.pbtns button { width: 25px; height: 21px; display: grid; place-items: center; border: 1px solid #adadad; background: #e2e2e2; }
.ptabs { gap: 8px; padding-left: 1px; }
.ptabs button { padding: 0 2px; }

.status { flex: none; height: 21px; display: flex; align-items: flex-end; padding-left: 436px; gap: 2px; background: linear-gradient(#dfe2e9, #a9adb8 40%, #b3b7c1); border-top: 1px solid #a2a6af; color: #22252b; }
.status button { height: 18px; padding: 0 3px; line-height: 15px; border: 1px solid #222; border-right-color: #fff; border-bottom-color: #fff; }
.status .up { border-color: #eee #888 #888 #eee; line-height: 14px; }
.cells { margin-left: auto; display: flex; align-self: stretch; }
.cells i { width: 74px; border-left: 1px solid #94989f; box-shadow: inset 1px 0 #c6c9d0; }
.cells i:first-child { width: 88px; }
.cells i:last-child { width: 79px; }
.size { width: 10px; height: 10px; margin: 0 1px 1px 0; }
</style>
